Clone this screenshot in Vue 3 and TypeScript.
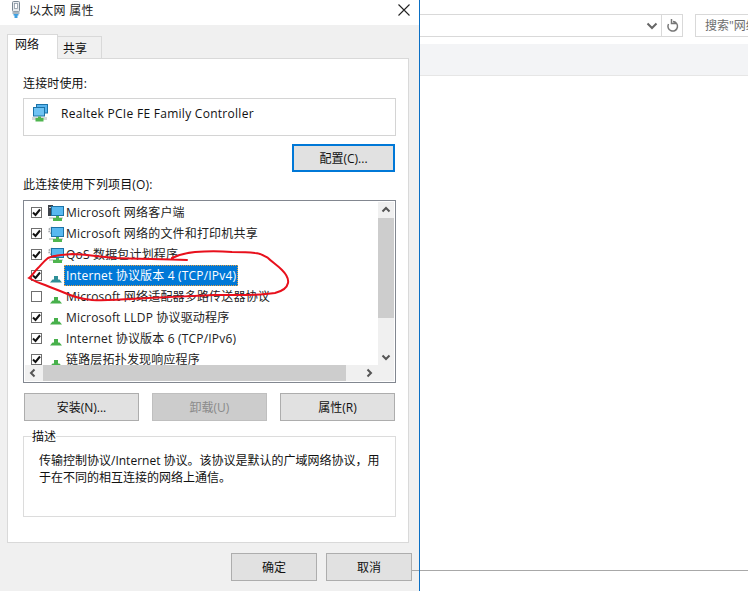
<script setup lang="ts">
interface Row { label: string; checked: boolean; kind: 'client' | 'service' | 'proto'; selected?: boolean }
const rows: Row[] = [
  { label: 'Microsoft 网络客户端', checked: true, kind: 'client' },
  { label: 'Microsoft 网络的文件和打印机共享', checked: true, kind: 'service' },
  { label: 'QoS 数据包计划程序', checked: true, kind: 'service' },
  { label: 'Internet 协议版本 4 (TCP/IPv4)', checked: true, kind: 'proto', selected: true },
  { label: 'Microsoft 网络适配器多路传送器协议', checked: false, kind: 'proto' },
  { label: 'Microsoft LLDP 协议驱动程序', checked: true, kind: 'proto' },
  { label: 'Internet 协议版本 6 (TCP/IPv6)', checked: true, kind: 'proto' },
  { label: '链路层拓扑发现响应程序', checked: true, kind: 'proto' },
]
</script>

<template>
  <div class="screen">
    <section class="dialog">
      <header class="titlebar">
        <svg class="title-icon" width="12" height="18" viewBox="0 0 12 18">
          <rect x="2.500" y="0.500" width="7" height="10" rx="1" fill="#e6eaee" stroke="#7a8894" />
          <rect x="4.500" y="2.500" width="3" height="5" fill="#fff" stroke="#8d9aa5" stroke-width=".8" />
          <path d="M2.500 10.500h7v2.500h-7z" fill="#a9b6c0" />
          <path d="M3.500 13h5v1.500h-1v2.500h-3v-2.500h-1z" fill="#3e9fe0" />
        </svg>
        <span class="title-text">以太网 属性</span>
        <svg class="close" width="14" height="14" viewBox="0 0 14 14">
          <path d="M1.500 1.500l11 11M12.500 1.500l-11 11" stroke="#222" stroke-width="1.100" fill="none" />
        </svg>
      </header>

      <div class="tabs">
        <div class="tab active">网络</div>
        <div class="tab">共享</div>
      </div>

      <div class="panel">
        <div class="label first">连接时使用:</div>
        <div class="adapter">
          <svg width="18" height="18" viewBox="0 0 18 18">
            <rect x="4.500" y="0.500" width="11" height="8.500" fill="#58b4ee" stroke="#1c73a8" />
            <rect x="1.500" y="3.500" width="11" height="8.500" fill="#6fc3f3" stroke="#1c73a8" />
            <rect x="0" y="13" width="15" height="3" fill="#d4d8d6" />
            <path d="M6 12.500h3V14h2.500v3.500h-8V14H6z" fill="#4fb54f" />
          </svg>
          <span class="adapter-name">Realtek PCIe FE Family Controller</span>
        </div>
        <div class="config-row">
          <button class="btn config">配置(C)...</button>
        </div>
        <div class="label second">此连接使用下列项目(O):</div>

        <div class="listbox">
          <div class="list-main">
            <div class="rows">
              <div v-for="r in rows" :key="r.label" class="row">
                <span class="check">
                  <svg v-if="r.checked" width="9" height="9" viewBox="0 0 9 9">
                    <path d="M1 4.500l2.500 2.500L8 1.500" fill="none" stroke="#111" stroke-width="2" />
                  </svg>
                </span>
                <svg v-if="r.kind !== 'proto'" class="item-icon" width="16" height="18" viewBox="0 0 16 18">
                  <rect v-if="r.kind === 'client'" x="0" y="1" width="5" height="11" fill="#3f444b" />
                  <circle v-else cx="4" cy="5.500" r="3" fill="#e4e6e8" stroke="#a4a8ac" stroke-width="1.600" stroke-dasharray="1.500 1" />
                  <rect v-if="r.kind === 'client'" x="1" y="3" width="2" height="1" fill="#c9ccd0" />
                  <rect x="3.500" y="2.500" width="12" height="9" fill="#58b8f0" stroke="#1c73a8" />
                  <rect x="1" y="13" width="14" height="2" fill="#d4d8d6" />
                  <path d="M8 12h3v2h3v3H5v-3h3z" fill="#4fb54f" />
                </svg>
                <svg v-else class="item-icon" width="16" height="18" viewBox="0 0 16 18">
                  <path d="M6 9h4v3.500h1.500L14 15.500H2l2.500-3H6z" :fill="r.selected ? '#2e8f97' : '#47b04b'" />
                </svg>
                <span class="row-text" :class="{ selected: r.selected }">{{ r.label }}</span>
              </div>
            </div>
            <div class="vscroll">
              <svg width="16" height="16" viewBox="0 0 16 16"><path d="M4.500 9.500L8 6l3.500 3.500" fill="none" stroke="#555" stroke-width="2" /></svg>
              <div class="vthumb"></div>
              <div class="spacer"></div>
              <svg width="16" height="16" viewBox="0 0 16 16"><path d="M4.500 6.500L8 10l3.500-3.500" fill="none" stroke="#555" stroke-width="2" /></svg>
            </div>
          </div>
          <div class="hscroll">
            <svg width="16" height="16" viewBox="0 0 16 16"><path d="M9.500 4.500L6 8l3.500 3.500" fill="none" stroke="#555" stroke-width="2" /></svg>
            <div class="hthumb"></div>
            <div class="spacer"></div>
            <svg width="16" height="16" viewBox="0 0 16 16"><path d="M6.500 4.500L10 8l-3.500 3.500" fill="none" stroke="#555" stroke-width="2" /></svg>
            <div class="corner"></div>
          </div>
        </div>

        <div class="action-row">
          <button class="btn action">安装(N)...</button>
          <button class="btn action disabled">卸载(U)</button>
          <button class="btn action">属性(R)</button>
        </div>

        <fieldset class="group">
          <legend>描述</legend>
          <p>传输控制协议/Internet 协议。该协议是默认的广域网络协议，用于在不同的相互连接的网络上通信。</p>
        </fieldset>
      </div>

      <footer class="footer">
        <button class="btn foot">确定</button>
        <button class="btn foot">取消</button>
      </footer>
    </section>

    <section class="explorer">
      <div class="addr-row">
        <div class="address">
          <svg class="chev" width="12" height="8" viewBox="0 0 12 8"><path d="M1.500 1.500L6 6l4.500-4.500" fill="none" stroke="#666" stroke-width="2" /></svg>
          <div class="refresh">
            <svg width="14" height="14" viewBox="0 0 14 14"><path d="M8 2.500A4.800 4.800 0 1 1 3.500 5M6.500 0v4.500H11" fill="none" stroke="#777" stroke-width="1.500" /></svg>
          </div>
        </div>
        <div class="search">搜索"网络连接"</div>
      </div>
      <div class="strip"></div>
      <div class="content"></div>
      <div class="status"></div>
    </section>

    <svg class="scribble" width="748" height="591" viewBox="0 0 748 591">
      <path d="M187 260C160 259 135 259 115 258C95 256 82 254 72 254C60 255 54 255 48 258C43 262 41 265 38 268C34 272 32 276 29 278C34 281 39 283 45 285C52 288 58 290 65 293C74 297 82 299 92 300C110 301 130 299 148 298C170 297 195 296 215 295C235 295 255 296 275 293C283 291 287 288 288 283C289 278 286 274 282 270C277 265 272 262 268 258C263 255 260 253 255 253C247 252 240 252 232 252C220 251 207 251 195 252C186 253 178 255 172 258" fill="none" stroke="#e8101c" stroke-width="2" stroke-linecap="round" />
    </svg>
  </div>
</template>

<style scoped>
.screen {
  position: relative;
  display: flex;
  width: 748px;
  height: 591px;
  overflow: hidden;
  background: #fff;
  font-family: "Open Sans", "Noto Sans CJK SC", sans-serif;
  font-size: 12px;
  color: #111;
}
.dialog {
  width: 419px;
  height: 591px;
  flex: none;
  background: #f0f0f0;
  display: flex;
  flex-direction: column;
}
.titlebar {
  height: 25px;
  flex: none;
  box-sizing: border-box;
  background: #fff;
  display: flex;
  align-items: center;
  padding: 0 8px 6px 10px;
}
.title-text {
  margin-left: 7px;
  color: #222;
  letter-spacing: .3px;
}
.close { margin-left: auto; }
.tabs {
  display: flex;
  align-items: flex-end;
  height: 34px;
  padding-left: 7px;
  margin-bottom: -1px;
  position: relative;
  z-index: 1;
}
.tab {
  width: 44px;
  height: 23px;
  box-sizing: border-box;
  background: #f0f0f0;
  border: 1px solid #d9d9d9;
  border-left: none;
  line-height: 24px;
  padding-left: 5px;
}
.tab.active {
  width: 51px;
  height: 25px;
  background: #fff;
  border-left: 1px solid #d9d9d9;
  border-bottom: none;
  line-height: 20px;
  padding-left: 7px;
}
.panel {
  margin-left: 7px;
  width: 402px;
  height: 485px;
  flex: none;
  box-sizing: border-box;
  background: #fff;
  border: 1px solid #d9d9d9;
  padding: 0 12px 0 15px;
}
.label { line-height: 16px; letter-spacing: .15px; }
.label.first { margin-top: 17px; }
.label.second { margin-top: 5px; }
.adapter {
  margin-top: 6px;
  height: 38px;
  box-sizing: border-box;
  border: 1px solid #d4d4d4;
  display: flex;
  align-items: center;
  padding: 0 0 8px 8px;
  width: 373px;
}
.adapter-name { margin-left: 11px; letter-spacing: .28px; }
.config-row {
  display: flex;
  justify-content: flex-end;
  margin-top: 8px;
  width: 372px;
}
.btn {
  font: inherit;
  color: #111;
  background: #e1e1e1;
  border: 1px solid #adadad;
  padding: 0;
  height: 28px;
  box-sizing: border-box;
}
.config {
  width: 103px;
  border: 2px solid #0078d7;
}
.listbox {
  margin-top: 7px;
  width: 373px;
  height: 183px;
  box-sizing: border-box;
  border: 1px solid #828790;
  padding: 1px;
  display: flex;
  flex-direction: column;
}
.list-main {
  height: 163px;
  flex: none;
  display: flex;
}
.rows {
  flex: 1;
  overflow: hidden;
}
.row {
  height: 21px;
  display: flex;
  align-items: center;
  padding-left: 6px;
}
.check {
  width: 11px;
  height: 11px;
  flex: none;
  box-sizing: border-box;
  border: 1px solid #6f6f6f;
  background: #fff;
  display: flex;
  align-items: center;
  justify-content: center;
}
.item-icon {
  margin-left: 6px;
  flex: none;
}
.row-text {
  padding: 0 2px;
  height: 21px;
  line-height: 21px;
  box-sizing: border-box;
  white-space: nowrap;
  color: #222;
  letter-spacing: .18px;
}
.row-text.selected {
  background: #0078d7;
  color: #fff;
  outline: 1px dotted #e8a040;
  outline-offset: -1px;
}
.vscroll {
  width: 16px;
  flex: none;
  background: #f0f0f0;
  display: flex;
  flex-direction: column;
}
.vthumb {
  height: 100px;
  background: #cdcdcd;
  flex: none;
}
.spacer { flex: 1; }
.hscroll {
  height: 16px;
  flex: none;
  background: #f0f0f0;
  display: flex;
}
.hthumb {
  width: 303px;
  background: #cdcdcd;
  margin-left: 2px;
  flex: none;
}
.corner { width: 17px; flex: none; }
.action-row {
  display: flex;
  justify-content: space-between;
  margin-top: 10px;
  width: 372px;
  padding-left: 1px;
  box-sizing: border-box;
}
.action { width: 115px; }
.disabled {
  background: #cccccc;
  border-color: #bfbfbf;
  color: #8a8a8a;
}
.group {
  margin: 6px 0 0;
  width: 373px;
  height: 90px;
  box-sizing: border-box;
  border: 1px solid #dcdcdc;
  padding: 0 12px 0 15px;
  min-inline-size: 0;
}
.group legend {
  padding: 2px 0 0;
  margin-left: -7px;
  line-height: 16px;
}
.group p {
  margin: 7px 0 0;
  line-height: 17px;
  color: #111;
}
.footer {
  position: relative;
  display: flex;
  justify-content: flex-end;
  gap: 9px;
  margin-top: 10px;
  padding-right: 7px;
}
.footer::after {
  content: "";
  position: absolute;
  right: 0;
  top: 17px;
  width: 7px;
  height: 1px;
  background: #a8a8a8;
}
.foot { width: 86px; }
.explorer {
  flex: 1;
  border-left: 1px solid #0a6fc4;
  display: flex;
  flex-direction: column;
  min-width: 0;
}
.addr-row {
  display: flex;
  margin-top: 14px;
  height: 23px;
  flex: none;
}
.address {
  width: 263px;
  box-sizing: border-box;
  border: 1px solid #d9d9d9;
  border-left: none;
  display: flex;
  align-items: center;
  justify-content: flex-end;
}
.chev { margin-right: 3px; }
.refresh {
  width: 20px;
  height: 21px;
  border-left: 1px solid #d9d9d9;
  display: flex;
  align-items: center;
  justify-content: center;
}
.search {
  margin-left: 12px;
  flex: 1;
  border: 1px solid #d9d9d9;
  border-right: none;
  padding-left: 9px;
  line-height: 21px;
  color: #6d6d6d;
  white-space: nowrap;
  overflow: hidden;
}
.strip {
  margin-top: 7px;
  height: 31px;
  flex: none;
  background: #f3f4f6;
  border-bottom: 1px solid #e6e6e6;
}
.content {
  height: 494px;
  flex: none;
  border-bottom: 1px solid #a8a8a8;
}
.status { flex: 1; }
.scribble {
  position: absolute;
  left: 0;
  top: 0;
  pointer-events: none;
}
</style>

<style>
html, body { margin: 0; background: #fff; }
</style>
